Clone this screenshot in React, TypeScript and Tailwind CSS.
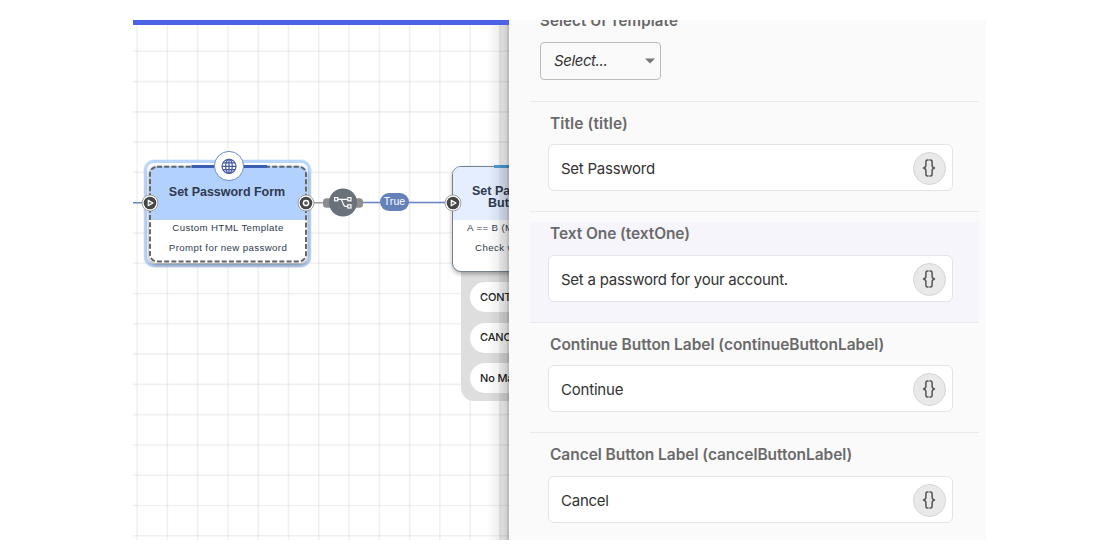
import React from "react";

const fields = [
  { label: "Title (title)", value: "Set Password", height: "h-[110px]", tint: "", track: "tracking-[0.1px]", valueTrack: "tracking-[-0.25px]" },
  { label: "Text One (textOne)", value: "Set a password for your account.", height: "h-[111px]", tint: "bg-[#f6f5fb]", track: "tracking-[-0.08px]", valueTrack: "tracking-[-0.25px]" },
  { label: "Continue Button Label (continueButtonLabel)", value: "Continue", height: "h-[110px]", tint: "", track: "tracking-[-0.04px]", valueTrack: "tracking-[-0.2px]" },
  { label: "Cancel Button Label (cancelButtonLabel)", value: "Cancel", height: "h-[111px]", tint: "", track: "tracking-[-0.05px]", valueTrack: "tracking-[-0.25px]" },
];

function Grid() {
  return (
    <svg className="absolute inset-0" width="377" height="520">
      <g stroke="#000" strokeOpacity="0.06" strokeWidth="1.6">
        {Array.from({ length: 13 }, (_, i) => (
          <path key={`v${i}`} d={`M${4.1 + i * 30.28} 5V520`} />
        ))}
        {Array.from({ length: 17 }, (_, i) => (
          <path key={`h${i}`} d={`M0 ${31.3 + i * 30.28}H377`} />
        ))}
      </g>
    </svg>
  );
}

function Port({ kind }: { kind: "play" | "dot" }) {
  return (
    <svg className="block" width="18" height="18" viewBox="0 0 18 18">
      <circle cx="9" cy="9" r="8" fill="#fff" stroke="#8a8a8a" strokeWidth="0.8" />
      <circle cx="9" cy="9" r="6.3" fill="#454545" />
      {kind === "play" ? (
        <path d="M7.2 6.2v5.6L12 9z" fill="#777" stroke="#fff" strokeWidth="1.1" strokeLinejoin="round" />
      ) : (
        <circle cx="9" cy="9" r="2.6" fill="#555" stroke="#fff" strokeWidth="1.5" />
      )}
    </svg>
  );
}

function Globe() {
  return (
    <svg className="block" width="32" height="32" viewBox="0 0 32 32" fill="none">
      <circle cx="16" cy="16" r="14.6" fill="#fff" stroke="#6f8dc4" strokeWidth="1" />
      <g stroke="#4458a4" strokeWidth="1.2">
        <circle cx="16" cy="16.3" r="7" />
        <ellipse cx="16" cy="16.3" rx="3.3" ry="7" />
        <path d="M16 9.3v14M9 16.3h14M10 12.9h12M10 19.7h12" />
      </g>
    </svg>
  );
}

function Canvas() {
  return (
    <div className="relative h-[520px] w-[376px] shrink-0 overflow-hidden bg-white font-['Liberation_Sans',sans-serif] text-[#2f3a4d]">
      <Grid />
      <div className="absolute inset-x-0 top-0 h-[5px] bg-[#4c62e6]" />

      <svg className="absolute inset-0" width="376" height="520">
        <path d="M0 182.8H10M222 182.5H314" stroke="#6685c2" strokeWidth="1.5" />
        <path d="M180 182.8H194" stroke="#999" strokeWidth="1.4" />
        <rect x="190" y="178.3" width="40" height="9.5" rx="3.5" fill="#8d8d8d" />
        <circle cx="210" cy="182.5" r="14" fill="#69717a" />
        <g stroke="#fff" strokeWidth="1.2" fill="none">
          <rect x="201.6" y="177.6" width="3.2" height="3.2" />
          <rect x="214.8" y="177.6" width="3.2" height="3.2" />
          <rect x="214.8" y="184.8" width="3.2" height="3.2" />
          <path d="M204.8 179.3H214.8M208 179.3C209.5 180 210 186.4 212.5 186.4H214.8" />
        </g>
      </svg>
      <div className="absolute left-[247px] top-[173px] flex h-[18px] w-[29px] items-center justify-center rounded-full bg-[#6481ba] text-[10.5px] tracking-[0.1px] text-white">
        True
      </div>

      {/* Selected form node */}
      <div className="absolute left-[11px] top-[140px] h-[107px] w-[167px] rounded-[10px] border-[3px] border-[#b3d1fc] bg-white opacity-90 shadow-[0_0_2px_#b3d1fc]" />
      <div className="absolute left-[16px] top-[146px] flex h-[97px] w-[158px] flex-col overflow-hidden rounded-[7px] bg-white shadow-[0_2px_4px_rgba(0,0,0,0.4)]">
        <div className="flex h-[54px] items-center justify-center whitespace-nowrap bg-[#b3d1ff] text-[12.5px] font-bold tracking-[-0.02px]">
          <span className="relative left-[-1px] top-[-1px]">Set Password Form</span>
        </div>
        <div className="-mt-px flex flex-col items-center text-[9.7px] tracking-[0.37px]">
          <span className="h-[20px] leading-[17px]">Custom HTML Template</span>
          <span className="leading-[17px]">Prompt for new password</span>
        </div>
      </div>
      <svg className="absolute left-[11px] top-[139px]" width="168" height="108" fill="none">
        <rect x="6" y="7.8" width="156" height="94.7" rx="7" stroke="#5f6368" strokeWidth="1.9" strokeDasharray="5 2.2" />
        <path d="M47.5 7.5H123" stroke="#3a5eb2" strokeWidth="3" />
      </svg>
      <div className="absolute left-[80px] top-[130px]"><Globe /></div>
      <div className="absolute left-[8px] top-[174px]"><Port kind="play" /></div>
      <div className="absolute left-[164px] top-[174px]"><Port kind="dot" /></div>

      {/* Decision node with its outcomes */}
      <div className="absolute left-[328px] top-[240px] flex h-[141px] w-[170px] flex-col gap-[10.5px] rounded-b-[13px] bg-[#dedede] pl-[9px] pt-[22px] text-[11px] tracking-[-0.15px] text-[#222]">
        {["CONTINUE", "CANCEL", "No Match"].map((name) => (
          <div key={name} className="flex h-[30px] w-[140px] shrink-0 items-center rounded-full bg-white pl-[10px] font-['Inter',sans-serif] font-medium">
            {name}
          </div>
        ))}
      </div>
      <div className="absolute left-[319px] top-[146px] flex h-[106px] w-[158px] flex-col overflow-hidden rounded-[9px] border-[1.5px] border-[#758390] bg-white shadow-[0_2px_4px_rgba(0,0,0,0.3)]">
        <div className="flex h-[53px] shrink-0 flex-col whitespace-nowrap bg-[#e4eeff] pt-[18px] text-[12.5px] font-bold leading-[12px]">
          <span className="pl-[19px]">Set Password</span>
          <span className="pl-[35px]">Button</span>
        </div>
        <div className="-mt-px flex flex-col whitespace-nowrap text-[9.7px] tracking-[0.38px]">
          <span className="h-[20px] pl-[14px] leading-[17px]">A == B (Multiple)</span>
          <span className="pl-[22px] leading-[17px]">Check which button</span>
        </div>
      </div>
      <div className="absolute left-[361px] top-[145px] h-[2.5px] w-[40px] bg-[#4e9dd8]" />
      <div className="absolute left-[311px] top-[174px]"><Port kind="play" /></div>

      <div className="absolute bottom-0 right-0 top-[5px] w-[22px] bg-linear-to-r from-transparent via-black/6 via-50% to-black/18" />
      <div className="absolute bottom-0 right-0 top-[5px] w-[10px] bg-black/3" />
      <div className="absolute bottom-0 right-0 top-[5px] w-[2px] bg-black/8" />
    </div>
  );
}

function Panel() {
  return (
    <div className="flex h-[520px] w-[477px] shrink-0 flex-col overflow-hidden bg-[#fafafa] pl-[21px] pr-[7px] font-['Inter',sans-serif]">
      <div className="flex h-[81px] shrink-0 flex-col pl-[10px]">
        <div className="-mt-[9px] h-[31px] text-[15px] font-semibold leading-[20px] tracking-[0.15px] text-[#666]">
          Select UI Template
        </div>
        <div className="flex h-[38px] w-[121px] shrink-0 items-center justify-between rounded-[4px] border border-[#bcbcbc] pl-[13px] pr-[5px]">
          <span className="text-[15px] italic tracking-[-0.4px] text-[#333]">Select...</span>
          <svg width="10" height="6"><path d="M0 0.5H10L5 5.5z" fill="#777" /></svg>
        </div>
      </div>
      {fields.map((f) => (
        <div key={f.value} className={`flex shrink-0 flex-col border-t border-[#eaeaee] pt-[10px] ${f.height}`}>
          <div className={`flex flex-1 flex-col justify-between pb-[20px] pl-[18px] pr-[26px] ${f.tint}`}>
            <div className={`pl-[2px] pt-[2px] text-[15.5px] font-semibold leading-[20px] text-[#6a6a6a] ${f.track}`}>{f.label}</div>
            <div className="flex h-[47px] items-center justify-between rounded-[6px] border border-[#e3e3e8] bg-white pl-[12px] pr-[6px] pt-px">
              <span className={`relative top-[1px] text-[15px] text-[#333] ${f.valueTrack}`}>{f.value}</span>
              <span className="flex h-[33px] w-[33px] items-center justify-center rounded-full border border-[#d9d4d6] bg-[#e9e9e9]">
                <svg className="mr-px" width="14" height="18" viewBox="0 0 14 18" fill="none" stroke="#555" strokeWidth="1.5" strokeLinejoin="round">
                  <path d="M6.6 1H5.5Q3.9 1 3.9 3V6.2Q3.9 8.4 1.5 9Q3.9 9.6 3.9 11.8V15Q3.9 17 5.5 17H6.6M7.4 1H8.5Q10.1 1 10.1 3V6.2Q10.1 8.4 12.5 9Q10.1 9.6 10.1 11.8V15Q10.1 17 8.5 17H7.4" />
                </svg>
              </span>
            </div>
          </div>
        </div>
      ))}
    </div>
  );
}

export default function App() {
  return (
    <div className="h-[560px] w-[1120px] overflow-hidden bg-white py-[20px] pl-[133px]">
      <div className="flex h-[520px] w-[853px] overflow-hidden">
        <Canvas />
        <Panel />
      </div>
    </div>
  );
}
